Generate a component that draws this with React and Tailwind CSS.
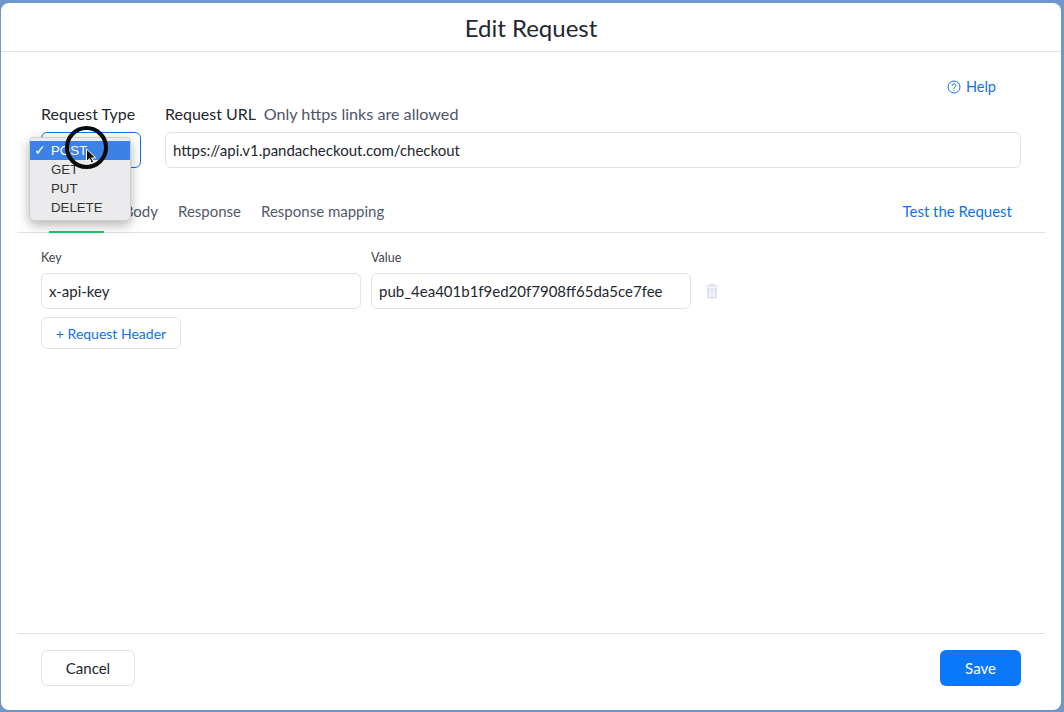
import React from "react";

function Trash() {
  return (
    <svg width="14" height="16" viewBox="0 0 14 16" fill="#dfe3ee">
      <path d="M5 0.5h4l.6 1.5H13v1.5H1V2h3.4z" />
      <path fillRule="evenodd" d="M2 4.5h10V14.5a1 1 0 0 1-1 1H3a1 1 0 0 1-1-1zM4.6 6v8h1.2V6zM8.2 6v8h1.2V6z" />
    </svg>
  );
}

function HelpIcon() {
  return (
    <svg width="14" height="14" viewBox="0 0 14 14" fill="none" stroke="#0e72ed" strokeWidth="1">
      <circle cx="7" cy="7" r="6" />
      <path d="M5.2 5.5a1.8 1.8 0 1 1 2.7 1.6c-.6.4-.9.7-.9 1.4" strokeLinecap="round" />
      <circle cx="7" cy="10.4" r=".5" fill="#0e72ed" stroke="none" />
    </svg>
  );
}

function Cursor() {
  return (
    <svg width="14" height="18" viewBox="0 0 14 18">
      <path d="M1.5 1v12.5l3-2.8 2 4.6 2.2-1-2-4.4h4z" fill="#111" stroke="#fff" strokeWidth="1" />
    </svg>
  );
}

function Input({ children, className }) {
  return (
    <div className={"h-9 flex items-center rounded-md border border-[#dfe3e8] bg-white text-[15px] text-[#23272f] " + className}>
      {children}
    </div>
  );
}

export default function App() {
  return (
    <div className="w-[1064px] h-[712px] overflow-hidden bg-[#6f97cb] pl-[1px] pr-[3px] pt-[3px] pb-[2px] font-['Lato',sans-serif]">
      <div className="relative w-full h-full flex flex-col rounded-[8px] bg-white">
        <div className="h-[49px] shrink-0 flex items-center justify-center pt-[2px] border-b border-[#e3e3e3] text-[24px] text-[#23272f]">
          Edit Request
        </div>

        <div className="flex-1 flex flex-col px-4">
          <div className="flex justify-end items-center gap-[5px] pt-[24px] pr-[49px] h-[45px] text-[14.5px] text-[#0e72ed]">
            <HelpIcon />
            <span>Help</span>
          </div>

          <div className="flex gap-6 pl-6 pr-6 mt-[7px]">
            <div className="w-[100px] shrink-0">
              <div className="h-5 leading-5 text-[16px] text-[#23272f]">Request Type</div>
              <div className="mt-[8px] h-9 rounded-md border border-[#0e72ed] bg-white"></div>
            </div>
            <div className="flex-1">
              <div className="h-5 leading-5 text-[16px] text-[#23272f]">
                Request URL <span className="ml-[4px] text-[16.15px] text-[#4d5568]">Only https links are allowed</span>
              </div>
              <Input className="mt-[8px] px-[7px]">https://api.v1.pandacheckout.com/checkout</Input>
            </div>
          </div>

          <div className="mt-[20px] flex items-stretch h-[45px] border-b border-[#dfe3e8] pl-8 pr-[33px] text-[15px] text-[#52596b]">
            <div className="relative w-[55px] flex items-center justify-center">
              <span className="invisible">Headers</span>
              <div className="absolute -bottom-[1px] left-0 right-0 h-[2px] bg-[#23c16b]"></div>
            </div>
            <div className="w-[48px] ml-[6px] flex items-center justify-end pt-[3px]">Body</div>
            <div className="ml-[20px] flex items-center pt-[3px]">Response</div>
            <div className="ml-[20px] flex items-center pt-[3px]">Response mapping</div>
            <div className="ml-auto flex items-center pt-[3px] text-[#0e72ed]">Test the Request</div>
          </div>

          <div className="flex-1 pl-6 pt-[16px]">
            <div className="flex gap-[10px] items-end">
              <div className="w-[320px]">
                <div className="text-[12.5px] h-[18px] leading-[18px] text-[#3d4350]">Key</div>
                <Input className="mt-[6px] px-[7px]">x-api-key</Input>
              </div>
              <div className="w-[320px]">
                <div className="text-[12.5px] h-[18px] leading-[18px] text-[#3d4350]">Value</div>
                <Input className="mt-[6px] px-[7px]">pub_4ea401b1f9ed20f7908ff65da5ce7fee</Input>
              </div>
              <div className="ml-[4px] h-9 flex items-center">
                <Trash />
              </div>
            </div>
            <div className="mt-[8px] w-[140px] h-8 flex items-center justify-center rounded-md border border-[#dfe3e8] text-[14px] text-[#0e72ed]">
              + Request Header
            </div>
          </div>

          <div className="h-[77px] shrink-0 flex items-start pt-[16px] justify-between border-t border-[#dfe3e8] pl-6 pr-6">
            <div className="w-[94px] h-9 flex items-center justify-center rounded-md border border-[#dfe3e8] text-[15px] text-[#23272f]">
              Cancel
            </div>
            <div className="w-[81px] h-9 flex items-center justify-center rounded-md bg-[#0b78fb] text-[15px] text-white">
              Save
            </div>
          </div>
        </div>

        <div className="absolute left-[28px] top-[134px] w-[102px] h-[84px] rounded-[5px] bg-[#ebebed] border border-[#cdcdcf] shadow-[0_4px_12px_rgba(0,0,0,0.3)] pt-[3px] text-[13.25px] text-[#333] font-['Liberation_Sans',sans-serif] leading-[19px]">
          <div className="h-[19px] bg-[#3b82e4] text-white pl-[21px] relative">
            <span className="absolute left-[4px] text-[14px]">✓</span>POST
          </div>
          <div className="pl-[21px]">GET</div>
          <div className="pl-[21px]">PUT</div>
          <div className="pl-[21px]">DELETE</div>
        </div>

        <div className="absolute left-[64px] top-[123px] w-[43px] h-[43px] rounded-full border-[4px] border-[#0a0a0a]"></div>
        <div className="absolute left-[84px] top-[145px]">
          <Cursor />
        </div>
      </div>
    </div>
  );
}
